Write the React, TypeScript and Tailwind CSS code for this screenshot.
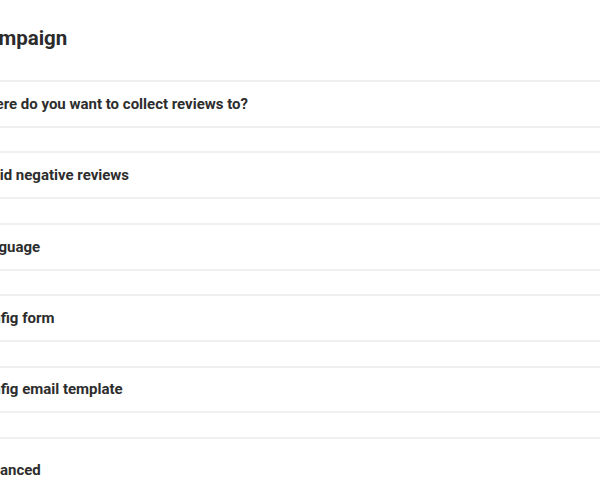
const sections = [
  'Where do you want to collect reviews to?',
  'Avoid negative reviews',
  'Language',
  'Config form',
  'Config email template',
];

export default function App() {
  return (
    <div className="min-h-[500px] bg-white overflow-hidden" style={{ fontFamily: 'Roboto, "Liberation Sans", sans-serif' }}>
      <div className="-ml-[26px]">
        <div className="pt-[24px] pb-[28px]">
          <h1 className="text-[20.5px] leading-[28px] font-bold text-[#2b2b2b]">Campaign</h1>
        </div>
        <div className="flex flex-col gap-[23.6px]">
          {sections.map((s) => (
            <div key={s} className="h-[47.8px] flex items-center border-y-2 border-[#f0f0f0] bg-white">
              <h2 className="text-[15px] leading-5 font-bold text-[#2d2d2d]">{s}</h2>
            </div>
          ))}
          <div className="border-t-2 border-[#f0f0f0] pt-[21px] pb-6">
            <h2 className="text-[15px] leading-5 font-bold text-[#2d2d2d]">Advanced</h2>
          </div>
        </div>
      </div>
    </div>
  );
}
